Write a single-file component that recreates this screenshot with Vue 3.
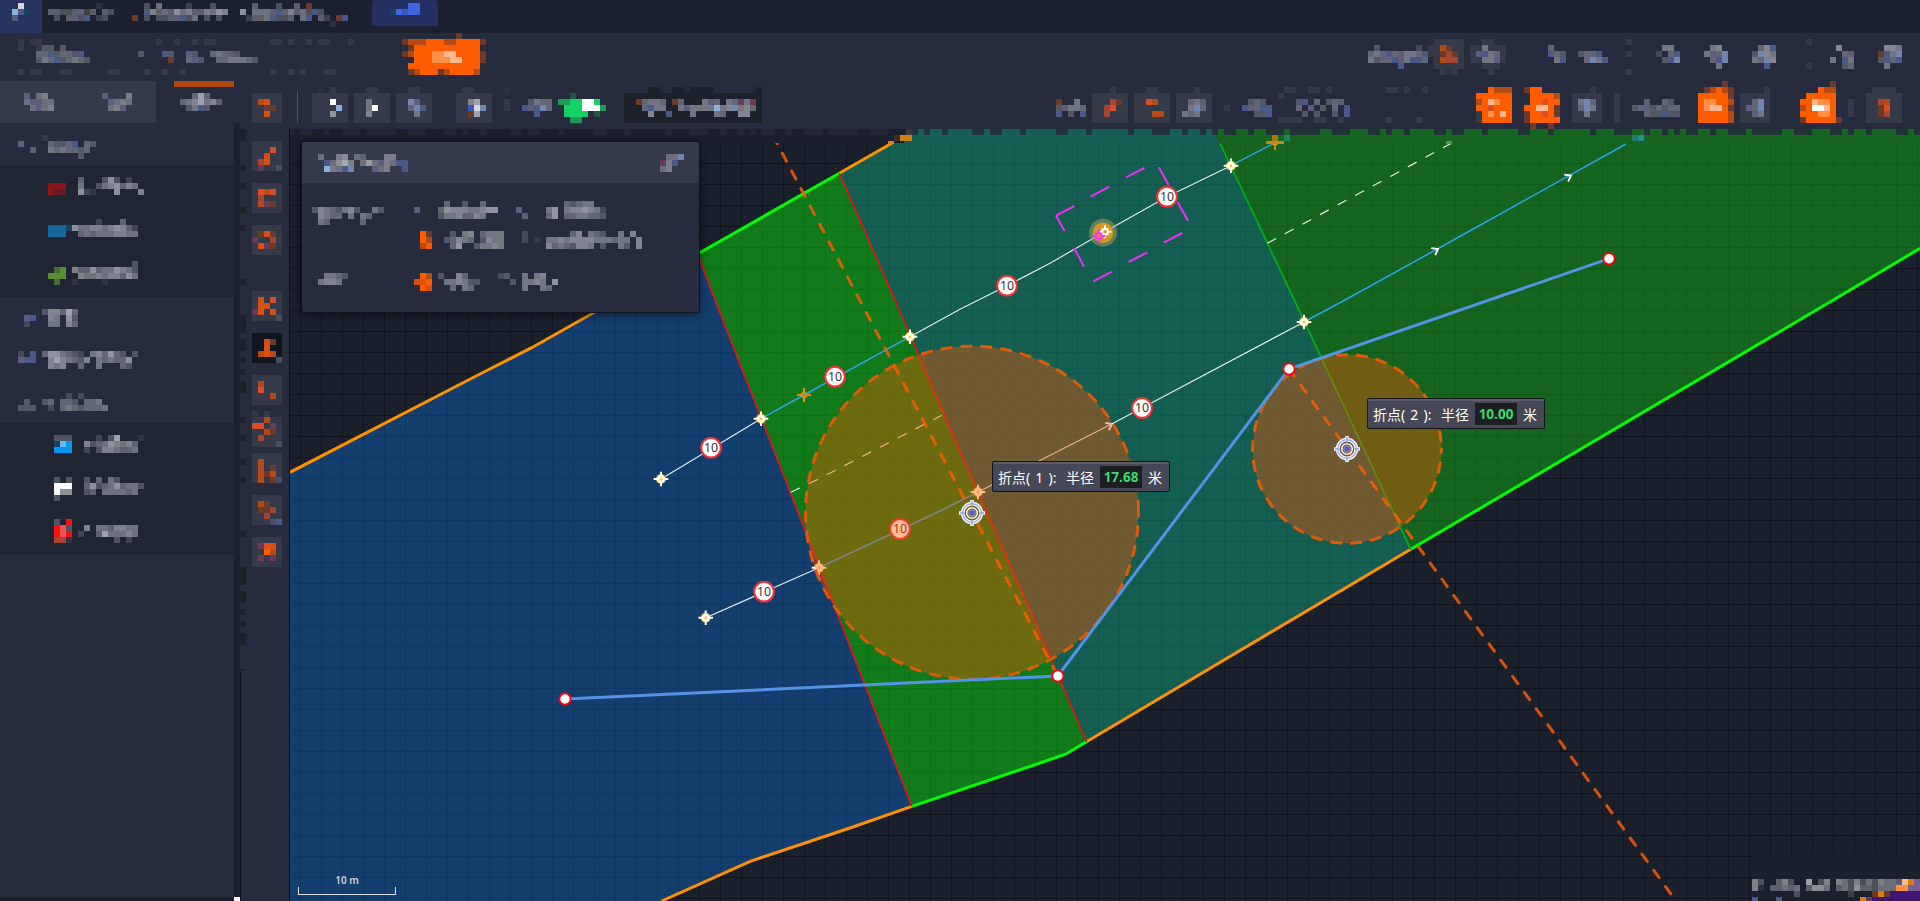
<script setup>
import { h } from 'vue'

const CELL = 6
const palette = {
  W: '#ffffff', w: '#d6d6de', b: '#4b5a85', c: '#7185ae', d: '#8fb0d8', p: '#5f5d7c', k: '#1d212c',
  K: '#171a24', s: '#353a4a', t: '#2c3143', T: '#494e60', o: '#b54a14', O: '#d8500f', r: '#d94e28', e: '#a6452f',
  m: '#683b56', n: '#6b3a2b', R: '#ff5c00', L: '#ff8f45', l: '#ffb894', g: '#14d065', G: '#1d9a58', f: '#245646',
  q: '#8e1418', Q: '#611c26', u: '#14689a', v: '#1a4160', y: '#5b8c34', Y: '#486d34', z: '#0a96ee', Z: '#62b9f8',
  i: '#f01414', I: '#f25058', B: '#3f66e0', a: '#3557be', P: '#3f1771', U: '#765f98', A: '#d67c12', x: '#11151f',
}
const colour = (ch) => palette[ch] || `rgba(208,209,216,${(Number(ch) * 0.09).toFixed(2)})`

const Mosaic = (props) => {
  const width = Math.max(...props.lines.map((l) => l.length))
  const cells = []
  props.lines.forEach((line, y) => {
    ;[...line].forEach((ch, x) => {
      if (ch !== '.' && ch !== ' ') {
        cells.push(h('rect', { x: x * CELL, y: y * CELL, width: CELL, height: CELL, fill: colour(ch) }))
      }
    })
  })
  return h('svg', { width: width * CELL, height: props.lines.length * CELL, 'shape-rendering': 'crispEdges' }, cells)
}
Mosaic.props = ['lines']

// [column, row, lines] entries become flex items separated by gaps
const strip = (items, start = 0) => {
  let end = start
  return items.map(([col, row, lines]) => {
    const style = { marginLeft: `${(col - end) * CELL}px`, marginTop: `${row * CELL}px` }
    end = col + Math.max(...lines.map((l) => l.length))
    return { style, lines }
  })
}

const title = strip([
  [2, 0, ['.w', 'dbv', '3..']],
  [8, 0, ['........1', '44334p24.43', '.3.4p3b.23.']],
  [22, 0, ['..3.5....2...3', '..b6454756446576', 'n.3.3344b35.3.3']],
  [39, 0, ['...4...3..4.n', '.7.5554b46453b3', '..2445b334.5b.42.nb', '................1']],
])
const project = [['...BB', 'vBaBB', '.....']]

const secondBar = strip([
  [3, 1, ['1.11...............', '1..133.3...........', '...44b3443b........', '...354b34543.......', '...................', '1.11...11......11..']],
  [23, 1, ['...1..1..1.11', '', '3...b3..p3..454p3', '.....n..4p3..4455543', '', '.1..1..1..']],
  [44, 1, ['.11.1..1.11...1', '', '', '', '', '.1..1.1...11']],
  [67, 0, ['.........n....', 'noooRRRooRRRRn', '.nRRRRRRRRRRR.', 'noRRRLLllRRRRn', '..RRRLLLllRRRn', '.RRRRRRRRRRRR.', '.noRRRnoRRRRo.']],
  [228, 1, ['', '.3......2.', '454b4p554b', '5344bp5bb4', '.....b....']],
  [238, 1, ['.sssss', 'ssonss', 'ssnens', '.soees', '.sssss', '..sts.']],
  [245, 1, ['..ss..', 'ss5sss', 'spb54s', 'ss55ps', '..sss.', '...s..']],
  [258, 2, ['4..', 'b43', '.5b']],
  [263, 3, ['344b', '.4c5b']],
  [271, 1, ['1', '', '1', '', '', '1']],
  [276, 2, ['.55.', '2.4b', '.3bc']],
  [284, 2, ['.56.', '5p4c', '.4bc', '..5.']],
  [292, 2, ['.46b', '3c65', '54c6', '..b.']],
  [301, 1, ['1', '', '', '', '1']],
  [305, 2, ['.6..', '..4p', '5.b5', '..34']],
  [313, 2, ['.665', 'nb5c', '3b4b', '.5..']],
])

const thirdBar = strip([
  [42, 2, ['sssss', 'soOss', 'ssnns', 'ssOss', 'sssss']],
  [52, 1, ['.t.s.', 'ssssss', 'sssWss', 'ssssds', 'sss7ss', 'ssssss']],
  [59, 1, ['..ss..', 'ssssss', 'ss5sss', 'ss5Wss', 'ss6sss', 'ssssss']],
  [66, 1, ['..ss..', 'ssssss', 'sscpss', 'ss4cbs', 'sss5ss', 'ssssss']],
  [76, 1, ['.ss...', 'ssssss', 'ss68ss', 'ssawcs', 'ssn8ss', 'ssssss']],
  [84, 1, ['t', '', '1', '1']],
  [87, 3, ['.3544', 'bpbc4', '..b..']],
  [93, 2, ['..f.....', 'GGggWWg.', '.gggWWWG', '.gggg.f.', '..GG....']],
  [104, 1, ['....kk..kk.kkkk.......k', 'kkkkkkkkkkkkkkkkkkkkkkk', 'kkn4554kn4kkk5p4k54m5mk', 'kkk4b55kk5p5555d56c564k', 'kkkk6kkbkkk5kkk54kk66kk', 'kkkkkkkkkkkkkkkkkkkkkkk']],
  [176, 3, ['n..5.', '3p554', 'b.3.b']],
  [182, 1, ['...s..', 'ssssss', 'sssens', 'sserss', 'ssesss', 'ssssss']],
  [189, 1, ['..ss..', 'ssssss', 'ssross', 'ssssss', 'sssoos', 'ssssss']],
  [196, 1, ['...s..', 'ssssss', 'ss45ps', 'ss5c4s', 's545ss', 'ssssss']],
  [204, 4, ['1']],
  [207, 3, ['.343.', 'bp4bb', '..33b']],
  [213, 1, ['.ss..ss.s', 's', '...3b.4.34p', '...4.p.3.4.b', '....3.3..3.b', 'ssss..ss..s']],
  [231, 1, ['ss.s..s', '', '', '', '', 's....s']],
  [246, 1, ['..Rooo', 'RRRRRR', 'oRlLRR', 'RRrRRR', 'sRLRlR', 'sRRRRR']],
  [254, 1, ['nRR..', '.RRRRo', '.RRrRR', 'RRllRn', 'nRRrRn', 'nRRRRR', '.n..n.']],
  [262, 1, ['...s.', 'sssss', 's5c4s', 's4c5s', 'ss5ss', 'sssss']],
  [269, 2, ['s', 's', 's', 's', 's']],
  [272, 3, ['..p..43.', '34p34344', '..433b33']],
  [283, 0, ['....n.', '.noRon', 'RRRRRn', 'RLLRRo', 'RLllRn', 'RRRRRo', 'RRRRRo']],
  [290, 1, ['....s', 'sssss', 'ss4cs', 'sp4cs', 'ssp5s', 'sssss']],
  [300, 0, ['.....n.', '...Roo.', '.RRRRR.', 'RRlLLR.', 'oRWWlR.', 'RRRLLR.', 'nRRRRRn']],
  [308, 3, ['s', 's', 's']],
  [311, 1, ['.ssss.', 'ssssss', 'sseoss', 'ssnrss', 'ssness', 'ssssss']],
], 40)

const tabs = [
  [[4, 2, ['p.45.', '4pp44', '.4p45']]],
  [[4, 2, ['p...5', '.p454', '.45p.']]],
  [[4, 2, ['..484.', '456856p', '.35b3.']]],
].map((t) => strip(t))

const groups = [
  { h: 42, dark: false, rows: [{ h: 42, m: strip([[3, 2, ['....1....', 'p....4334b.43', '..p..5454434.', '..........3..']]]) }] },
  {
    dark: true,
    h: 132,
    rows: [
      { h: 42, m: strip([[8, 2, ['.....4...373.2', 'qqq..5..3567465', 'qQQ..721...7...6']]]) },
      { h: 42, m: strip([[8, 2, ['........2...4', 'uuuv75566567642', 'uuu..4545556655']]]) },
      { h: 48, m: strip([[8, 2, ['..............3', '.Yy.64474557653', 'yyy..6556566475', '.Y..1....1']]]) },
    ],
  },
  {
    dark: false,
    h: 126,
    rows: [
      { h: 42, m: strip([[3, 2, ['....366484', '.pb..65.73', '.2...55.64']]]) },
      { h: 42, m: strip([[3, 2, ['2.b.4775432.564743.3', 'pbb..6865436.545447', '.....656..4..5...43']]]) },
      { h: 42, m: strip([[3, 1, ['........2.2', '.3..34.443.445', '333..2.45434445']]]) },
    ].map((r, i) => (i === 2 ? { h: 42, m: strip([[3, 1, ['', '........2.2', '.3..34.443.445', '333..2.45434445']]]) } : r)),
  },
  {
    dark: true,
    h: 132,
    rows: [
      { h: 42, m: strip([[9, 2, ['333....2.38...1', 'vZz..634576564', 'zzz..2.3665445']]]) },
      { h: 42, m: strip([[9, 2, ['3.3..3.4.53', 'WWW..4734574553', 'W77..34.555545', '3']]]) },
      { h: 48, m: strip([[9, 2, ['3.i..........', 'iI3..6.5546655', 'iIi.2..4855565', 'ee1.......3.2']]]) },
    ],
  },
]

const tools = [
  ['sssss', 'sssrs', 'ssOss', 'seOss', 'smssT'],
  ['sssss', 'srors', 'sesss', 'somns', 'sssss'],
  ['sssss', 'snOns', 'msses', 'sOmns', 'sssss'],
  ['sssss', 'sOsrs', 'sOOss', 'mOsOs', 'ssssT'],
  ['xxxxx', 'xxOnx', 'xxOxx', 'xoOox', 'xxxxT'],
  ['sssss', 'sosss', 'srsss', 'sssos', 'sssss'],
  ['s.s..', 'ssoss', 'rrsms', 'ssons', 'sesss', 'ssssT'],
  ['sssss', 'sosss', 'sosns', 'sonos', 'sosnT'],
  ['sssss', 'sonss', 'snnes', 'ssess', 'sssTb'],
  ['sssss', 'smrOs', 'ssRos', 'smsms', 'sssss'],
]

const panelTitle = strip([[3, 2, ['4..56.43...55', '.b4685.474p54bb', '.d54bc...p45..b']]])
const panelClose = ['.44c', 'm5b.', '45..']
const panelRows = [
  { h: 42, m: strip([[2, 4, ['36543563..53', '.6544.5.54', '.54.....4']], [19, 3, ['.....4..3..4..', 'p...4766655677', '....35564465..']], [36, 3, ['........43455', 'p....57.5667652', '.p...47.4455443']]]) },
  { h: 42, m: strip([[20, 1, ['Rn...3.56.4555', 'Ro..34654.3655', 'oR...47..35565']], [37, 1, ['2.......46.543..5.6', '2.1.55656666555455.6', '....64543665.3..53.6']]]) },
  { h: 46, m: strip([[3, 1, ['.5543', '5665.', '.....']], [19, 1, ['.Ro.3..64..', 'OOR..556533', '.RO...4.54.']], [33, 1, ['23..5.56.', '..3.5565.7', '....5..54']]]) },
]

const gridX = Array.from({ length: 78 }, (_, i) => 300.5 + i * 21)
const gridY = Array.from({ length: 36 }, (_, i) => 163.5 + i * 21)

const edge = Array.from({ length: 272 }, (_, i) => ({ x: 288 + i * CELL, on: (i * 37 + ((i * i) % 11)) % 7 < 3 }))
const seam = Array.from({ length: 92 }, (_, i) => ({ y: i * CELL, on: (i * 5 + ((i * i) % 7)) % 6 < 2 }))

const baseStars = [[661, 479], [761, 418.7], [910, 336.7], [1231, 165.7], [1304, 322], [705.7, 617.7], [819, 567.7], [978, 492]]
const limits = [[711, 447.7], [835, 376.7], [1007, 285.7], [1167, 196.7], [764, 591.7], [900, 529], [1142, 408]]
const nodes = [[565, 699], [1057.8, 676], [1289, 369], [1609, 258.7]]
const targets = [[972, 513], [1347, 449]]
const arrows = [[1112, 424, -27], [1438, 249, -29], [1571, 175.5, -29]]
const tips = [{ id: 1, r: '17.68', cls: 'tip-one' }, { id: 2, r: '10.00', cls: 'tip-two' }]
const footer = ['63..463..8.36.65363536554lAU', '61.44545.4775.4537443555LLUU', '.......3........2.kknAnPPPPP', 'b...b.............AmPPPPPPPP']
</script>

<template>
  <div class="app">
    <header class="header">
      <div class="logo"></div>
      <div class="header-text"><Mosaic v-for="(m, i) in title" :key="i" :lines="m.lines" :style="m.style" /></div>
      <div class="project"><Mosaic v-for="(m, i) in project" :key="i" :lines="m" /></div>
    </header>

    <div class="bar-two"><Mosaic v-for="(m, i) in secondBar" :key="i" :lines="m.lines" :style="m.style" /></div>

    <div class="main">
      <aside class="sidebar">
        <div class="tabs">
          <div v-for="(t, i) in tabs" :key="i" class="tab" :class="{ active: i === 2 }">
            <Mosaic v-for="(m, j) in t" :key="j" :lines="m.lines" :style="m.style" />
          </div>
        </div>
        <div v-for="(g, i) in groups" :key="i" class="group" :class="{ dark: g.dark }" :style="{ height: g.h + 'px' }">
          <div v-for="(r, j) in g.rows" :key="j" class="row" :style="{ height: r.h + 'px' }">
            <Mosaic v-for="(m, k) in r.m" :key="k" :lines="m.lines" :style="m.style" />
          </div>
        </div>
        <div class="side-foot"></div>
      </aside>
      <div class="gutter"><span class="grip"></span></div>

      <section class="work">
        <div class="bar-three">
          <Mosaic v-for="(m, i) in thirdBar" :key="i" :lines="m.lines" :style="m.style" />
          <span class="divider"></span>
        </div>
        <div class="stage">
          <div class="tools">
            <svg class="seam" width="6" height="542" shape-rendering="crispEdges">
              <template v-for="s in seam" :key="s.y">
                <rect v-if="s.on" x="0" :y="s.y" width="6" height="6" fill="#1d212c" />
              </template>
            </svg>
            <Mosaic v-for="(t, i) in tools" :key="i" :lines="t" class="tool" :class="{ spaced: i === 3, tight: i === 6 || i === 7 }" />
          </div>
          <div class="canvas">
            <svg class="map" viewBox="290 129 1630 772" width="1630" height="772">
              <g class="grid">
                <line v-for="x in gridX" :key="'x' + x" :x1="x" :x2="x" y1="144" y2="901" />
                <line v-for="y in gridY" :key="'y' + y" x1="290" x2="1920" :y1="y" :y2="y" />
              </g>
              <polygon fill="rgba(13,92,175,.5)" points="290,472.3 480,374 531.7,347.7 697.5,254 715,300 805,530 911.8,806.3 851.4,827.5 750.2,861.3 661.6,901 290,901" />
              <polygon fill="rgba(7,212,7,.5)" points="697.5,254 839.3,173.3 895,300 960,451.7 1025.3,600 1086.5,741.7 1065,754.5 911.8,806.3 805,530 715,300" />
              <polygon fill="rgba(13,156,119,.5)" points="839.3,173.3 893,142.5 914,129 1214,129 1220,143.3 1294.3,300 1410.7,549.3 1086.5,741.7 1025.3,600 960,451.7 895,300" />
              <polygon fill="rgba(15,168,19,.5)" points="1214,129 1920,129 1920,248.3 1833.3,300 1410.7,549.3 1294.3,300 1220,143.3" />
              <g class="border">
                <path class="orange" d="M290 472.3 480 374 531.7 347.7 697.5 254M839.3 173.3 893 142.5M661.6 901 750.2 861.3 851.4 827.5 911.8 806.3M1086.5 741.7 1410.7 549.3" />
                <path class="lime" d="M697.5 254 839.3 173.3M911.8 806.3 1065 754.5 1086.5 741.7M1410.7 549.3 1833.3 300 1920 248.3" />
              </g>
              <path class="red" d="M697.5 254 715 300 805 530 911.8 806.3M839.3 173.3 895 300 960 451.7 1025.3 600 1086.5 741.7" />
              <path class="green" d="M1220 143.3 1294.3 300 1410.7 549.3" />
              <path class="guide" d="M790.7 492.3 820 478.3 941.7 415.3M1267.3 243.3 1434.7 152.3 1452 143" />
              <path class="lane blue" d="M761 418.7 804 395 910 336.7M819 567.7 940 511 978 492M1231 165.7 1275 142.7M1304 322 1345 300 1440 247.5 1626 144" />
              <path class="lane" d="M661 479 761 418.7M910 336.7 960 309.3 1007 285.7 1050 263.3 1103 232.7 1167 196.7 1231 165.7M705.7 617.7 819 567.7M978 492 1111.7 424 1304 322" />
              <path class="magenta" d="M1056 215.7l18.3-9.7M1090.7 196.7l18.6-10M1126 177.3l18.4-9.3M1158.7 167.3l10 18M1177.7 202.3l10.3 18.4M1056 215.7l8.7 15.3M1074.3 248.3l9.7 18.4M1093.3 281.3l18.7-9.6M1128.7 262l18.6-9.7M1163.7 242.7l18.6-9.7" />
              <g class="star gold"><path v-for="[x, y] in [[804, 395], [1275, 142.7]]" :key="x" :transform="`translate(${x} ${y})`" d="M-7 0h4M3 0h4M0-7v4M0 3v4M-3 0L0-3 3 0 0 3Z" /></g>
              <circle cx="1103" cy="232.7" r="14" fill="#aca168" opacity=".5" />
              <circle cx="1103" cy="232.7" r="10.3" fill="#d2971c" />
              <g class="star white"><path transform="translate(1105 231.7)" d="M-6.5 0h3M3.5 0h3M0-6.5v3M0 3.5v3M-2.5-2.5H2.5V2.5H-2.5Z" /></g>
              <g class="star pink"><path transform="translate(1098.8 236)" d="M-6.5 0h3M3.5 0h3M0-6.5v3M0 3.5v3M-2.5-2.5H2.5V2.5H-2.5Z" /></g>
              <g v-for="[x, y] in baseStars" :key="'s' + x" :transform="`translate(${x} ${y})`">
                <circle r="5" fill="#eab92c" />
                <path d="M-7.3-1H-4L-1-4V-7.3H1V-4L4-1H7.3V1H4L1 4V7.3H-1V4L-4 1H-7.3Z" fill="#fffdf2" />
                <circle r="3.8" fill="#fffdf2" />
                <circle r="1.5" fill="#f3c75e" />
              </g>
              <path v-for="[x, y, a] in arrows" :key="'a' + x" class="arrow" :transform="`translate(${x} ${y}) rotate(${a})`" d="M-5.5-4 0 0-5.5 4" />
              <g v-for="[x, y] in limits" :key="'l' + x" class="limit" :transform="`translate(${x} ${y})`">
                <circle r="9.9" />
                <text y="4.3">10</text>
              </g>
              <circle class="zone" cx="972" cy="512.7" r="166.5" />
              <circle class="zone" cx="1347" cy="449" r="94.3" />
              <path class="axis" d="M773 135.6 1057.8 676" />
              <path class="axis" d="M1289 369 1671.7 895" />
              <path class="route" d="M565 699 1057.8 676 1289 369 1609 258.7" />
              <circle v-for="[x, y] in nodes" :key="'n' + x" class="node" :cx="x" :cy="y" r="5.7" />
              <g v-for="[x, y] in targets" :key="'t' + x" :transform="`translate(${x} ${y})`" fill="none">
                <circle r="9.3" stroke="#f4f5ff" stroke-width="3.8" />
                <path d="M0-13V-8M0 13V8M-13 0H-8M13 0H8" stroke="#f4f5ff" stroke-width="3.6" />
                <circle r="9.3" stroke="#8fa4ee" stroke-width="1.2" />
                <path d="M0-12V-8M0 12V8M-12 0H-8M12 0H8" stroke="#8fa4ee" stroke-width="1.4" />
                <circle r="5.3" stroke="#eef0fb" stroke-width="1.6" />
                <circle r="3.2" fill="#5b5cae" stroke="#8391dd" stroke-width="1" />
              </g>
              <g shape-rendering="crispEdges">
                <rect x="290" y="129" width="614" height="14" fill="#1c202d" />
                <rect x="894" y="135" width="6" height="6" fill="#3a2f2a" />
                <rect x="900" y="135" width="12" height="6" fill="#c8841a" />
                <rect x="906" y="129" width="6" height="6" fill="#b87018" />
                <rect x="888" y="141" width="6" height="3" fill="#d98810" />
                <rect x="1266" y="141" width="18" height="3" fill="#c48a1c" />
                <rect x="1272" y="135" width="6" height="6" fill="#a8780f" />
                <rect x="1284" y="135" width="6" height="6" fill="#258068" />
                <rect x="1290" y="129" width="6" height="6" fill="#245064" />
                <rect x="1632" y="135" width="6" height="6" fill="#247c68" />
                <rect x="1638" y="135" width="6" height="6" fill="#2b8c90" />
                <rect x="1446" y="141" width="6" height="3" fill="#5b9060" />
                <template v-for="e in edge" :key="e.x">
                  <rect v-if="e.on" :x="e.x" y="129" width="6" height="6" fill="#262b3d" :opacity="e.x < 900 ? 0.6 : 0.85" />
                </template>
                <rect x="1752" y="854" width="168" height="47" fill="#1b202d" />
              </g>
            </svg>
            <div class="scale"><span>10 m</span></div>
            <Mosaic :lines="footer" class="footer-note" />
            <div class="panel">
              <div class="panel-head">
                <div class="panel-title"><Mosaic v-for="(m, i) in panelTitle" :key="i" :lines="m.lines" :style="m.style" /></div>
                <Mosaic :lines="panelClose" />
              </div>
              <div class="panel-body">
                <div v-for="(r, i) in panelRows" :key="i" class="row" :style="{ height: r.h + 'px' }">
                  <Mosaic v-for="(m, j) in r.m" :key="j" :lines="m.lines" :style="m.style" />
                </div>
              </div>
            </div>
            <div v-for="t in tips" :key="t.id" class="tip" :class="t.cls">
              <span class="tip-name">折点( {{ t.id }} ):</span><span class="tip-label">半径</span><span class="tip-value">{{ t.r }}</span><span>米</span>
            </div>
          </div>
        </div>
      </section>
    </div>
  </div>
</template>

<style>
body {
  background: #262b3d;
  overflow: hidden;
}
</style>

<style scoped>
.app {
  width: 1920px;
  height: 901px;
  overflow: hidden;
  display: flex;
  flex-direction: column;
  background: #262b3d;
  font-family: "Noto Sans", "Noto Sans CJK SC", sans-serif;
}
svg { display: block; flex: none; }
.header { height: 33px; flex: none; display: flex; background: #1b212e; position: relative; }
.logo { width: 42px; height: 33px; background: #263460; border-radius: 0 0 2px 2px; }
.header-text { display: flex; align-items: flex-start; position: absolute; left: 0; top: 3px; }
.project { margin-left: 330px; width: 66px; height: 26px; background: #243060; border-radius: 4px 4px 0 0; padding: 3px 0 0 18px; box-sizing: border-box; }
.bar-two { height: 48px; flex: none; display: flex; align-items: flex-start; overflow: hidden; }
.main { height: 820px; display: flex; }
.sidebar { width: 234px; flex: none; display: flex; flex-direction: column; }
.tabs { height: 42px; flex: none; display: flex; }
.tab { width: 78px; display: flex; align-items: flex-start; background: #353a4a; box-sizing: border-box; }
.tab.active { background: #262b3d; position: relative; }
.tab.active::before { content: ""; position: absolute; left: 18px; top: 0; width: 60px; height: 6px; background: #b14812; }
.group.dark { background: #202534; }
.row { display: flex; align-items: flex-start; }
.side-foot { margin-top: auto; height: 4px; background: #1b202d; }
.gutter { width: 6px; flex: none; margin-top: 42px; background: #1c212d; display: flex; align-items: flex-end; }
.grip { width: 6px; height: 4px; background: #fff; }
.work { width: 1680px; display: flex; flex-direction: column; }
.bar-three { height: 48px; flex: none; display: flex; align-items: flex-start; position: relative; }
.divider { position: absolute; left: 57px; top: 10px; width: 1px; height: 32px; background: #4c5161; }
.stage { display: flex; height: 772px; }
.tools { position: relative; width: 50px; box-sizing: border-box; border-right: 1px solid #10121a; padding: 12px 0 0 12px; display: flex; flex-direction: column; gap: 12px; background: linear-gradient(#10121a, #10121a) 0 542px / 1px 230px no-repeat; }
.seam { position: absolute; left: 0; top: 0; }
.tool.spaced { margin-top: 24px; }
.tool.tight { margin-top: -6px; }
.canvas { width: 1630px; height: 772px; position: relative; overflow: hidden; background: #1b202d; }
.grid line { stroke: #11131d; stroke-width: 1; }
.border path { fill: none; stroke-width: 3; }
.orange { stroke: #ff9000; }
.lime { stroke: #00fc00; }
.red { fill: none; stroke: #e0141e; stroke-width: 1.8; }
.green { fill: none; stroke: #05a81c; stroke-width: 1.8; }
.guide { fill: none; stroke: #e3f0e0; stroke-width: 1.2; stroke-dasharray: 10 10; }
.lane { fill: none; stroke: #dcebea; stroke-width: 1.2; }
.lane.blue { stroke: #2fa2ea; stroke-width: 1.5; }
.magenta { fill: none; stroke: #f02df5; stroke-width: 2; }
.star path { fill: none; stroke-width: 2; }
.gold path { stroke: #f08c00; }
.pink path { stroke: #f436f0; }
.white path { stroke: #fff; }
.arrow { fill: none; stroke: #fff; stroke-width: 1.9; }
.limit circle { fill: #fff; stroke: #f22f35; stroke-width: 2; }
.limit text { font: 12.3px "Noto Sans", sans-serif; fill: #333; text-anchor: middle; }
.zone { fill: rgba(255, 84, 0, 0.39); stroke: #df5b0a; stroke-width: 3; stroke-dasharray: 9.5 10.5; stroke-linecap: round; stroke-dashoffset: 6; }
.axis { fill: none; stroke: rgba(255, 90, 5, 0.84); stroke-width: 3; stroke-dasharray: 9 11; stroke-linecap: round; }
.route { fill: none; stroke: #5492e6; stroke-width: 3; }
.node { fill: #fff; stroke: #f00510; stroke-width: 1.9; }
.scale { position: absolute; left: 8px; top: 745px; width: 98px; height: 21px; box-sizing: border-box; text-align: center; font-size: 10px; line-height: 12px; font-weight: 600; color: #c9d2dc; }
.scale::after { content: ""; position: absolute; left: 0; right: 0; bottom: 0; height: 8px; box-sizing: border-box; border: 1px solid #dde1e6; border-top: 0; }
.footer-note { position: absolute; left: 1462px; top: 750px; }
.panel { position: absolute; left: 11px; top: 12px; width: 399px; height: 172px; box-sizing: border-box; background: #262b3d; border: 1px solid #11141d; border-radius: 3px; box-shadow: 0 2px 8px rgba(0, 0, 0, 0.5); overflow: hidden; }
.panel-head { height: 41px; background: #353a4a; display: flex; justify-content: space-between; align-items: center; padding-right: 15px; }
.panel-title { display: flex; align-items: flex-start; height: 41px; margin-left: -2px; }
.panel-body { margin-left: -2px; }
.tip { position: absolute; width: 178px; height: 31px; box-sizing: border-box; display: flex; align-items: center; background: #474857; border: 1px solid #12141c; border-radius: 2px; box-shadow: inset 0 2px 0 #5c5d6b; color: #fff; font: 14px "Noto Sans", "Noto Sans CJK SC", sans-serif; padding: 1px 6px 0 5px; white-space: nowrap; }
.tip-one { left: 702px; top: 332px; }
.tip-two { left: 1077px; top: 269px; }
.tip-name { width: 68px; word-spacing: 1.5px; }
.tip-label { width: 34px; }
.tip-value { width: 42px; height: 22px; margin-right: 6px; background: #1d1e22; color: #31df6b; font: bold 13.5px/22px "Open Sans", sans-serif; text-align: center; }
</style>
